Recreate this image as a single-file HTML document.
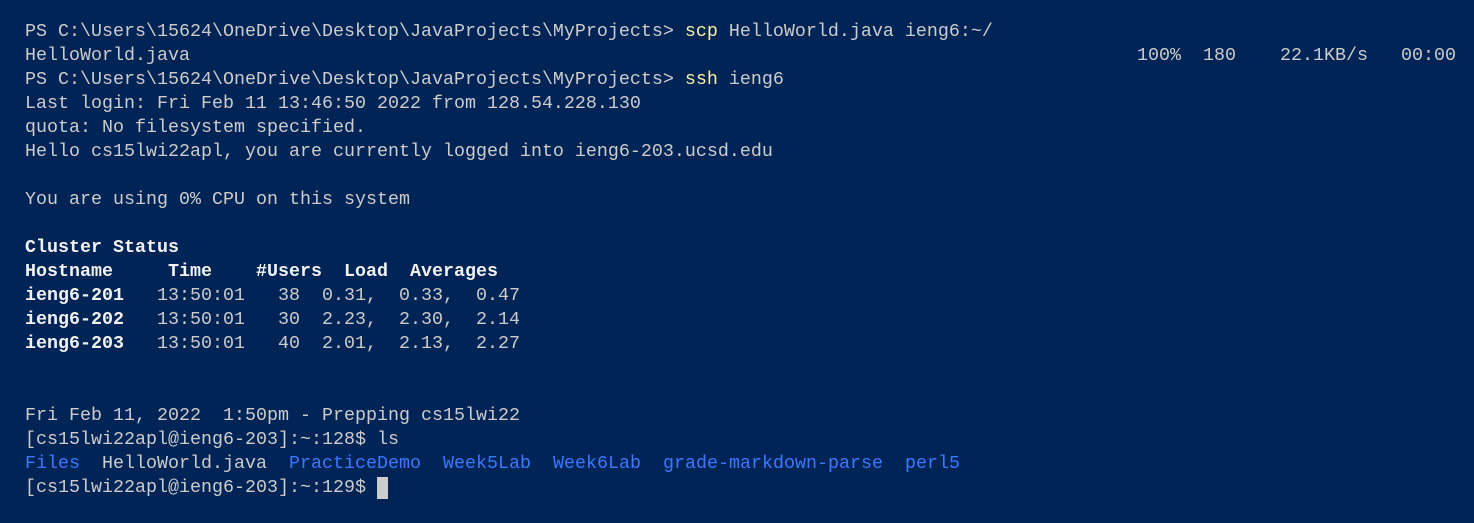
<!DOCTYPE html>
<html><head><meta charset="utf-8"><style>
html,body{margin:0;padding:0;background:#012456;width:1474px;height:523px;overflow:hidden}
pre{margin:0;position:absolute;left:25px;top:20px;font-family:"Liberation Mono","DejaVu Sans Mono",monospace;font-size:18.33px;line-height:24px;color:#cccccc}
.y{color:#f9f1a5}.b{color:#3b78ff}.w{font-weight:bold;color:#f2f2f2}
.r{position:absolute;left:1137px;top:44px;font-family:"Liberation Mono",monospace;font-size:18.33px;line-height:24px;color:#cccccc;white-space:pre}
.cur{position:absolute;left:377px;top:477px;width:11px;height:22px;background:#cccccc}
</style></head><body>
<pre>PS C:\Users\15624\OneDrive\Desktop\JavaProjects\MyProjects&gt; <span class="y">scp</span> HelloWorld.java ieng6:~/
HelloWorld.java
PS C:\Users\15624\OneDrive\Desktop\JavaProjects\MyProjects&gt; <span class="y">ssh</span> ieng6
Last login: Fri Feb 11 13:46:50 2022 from 128.54.228.130
quota: No filesystem specified.
Hello cs15lwi22apl, you are currently logged into ieng6-203.ucsd.edu

You are using 0% CPU on this system

<span class="w">Cluster Status</span>
<span class="w">Hostname     Time    #Users  Load  Averages</span>
<span class="w">ieng6-201</span>   13:50:01   38  0.31,  0.33,  0.47
<span class="w">ieng6-202</span>   13:50:01   30  2.23,  2.30,  2.14
<span class="w">ieng6-203</span>   13:50:01   40  2.01,  2.13,  2.27


Fri Feb 11, 2022  1:50pm - Prepping cs15lwi22
[cs15lwi22apl@ieng6-203]:~:128$ ls
<span class="b">Files</span>  HelloWorld.java  <span class="b">PracticeDemo</span>  <span class="b">Week5Lab</span>  <span class="b">Week6Lab</span>  <span class="b">grade-markdown-parse</span>  <span class="b">perl5</span>
[cs15lwi22apl@ieng6-203]:~:129$ </pre>
<div class="r">100%  180    22.1KB/s   00:00</div>
<div class="cur"></div>
</body></html>
